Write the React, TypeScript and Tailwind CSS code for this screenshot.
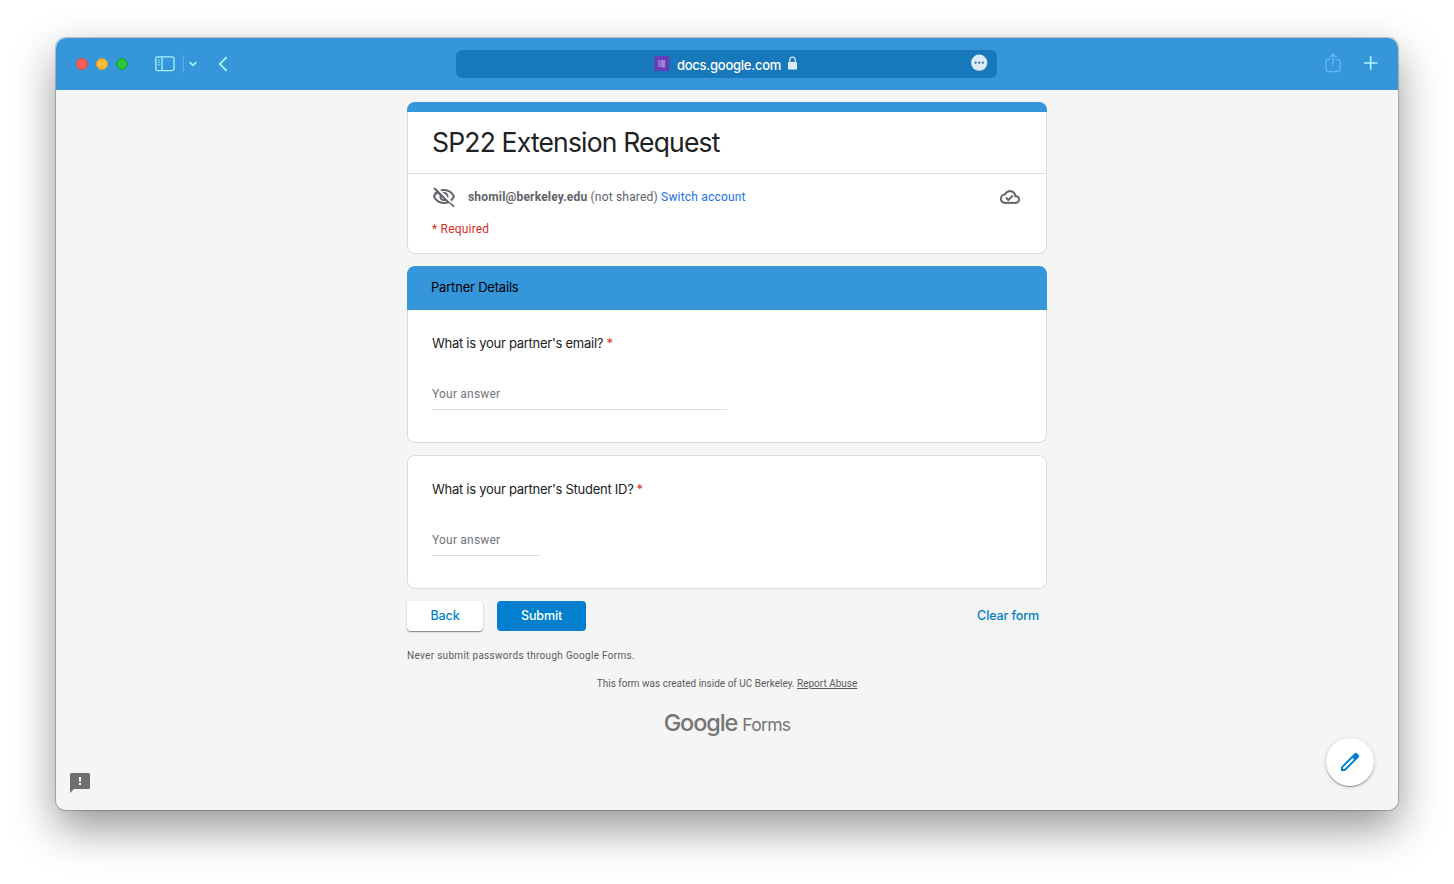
import type { ReactNode } from 'react';

const body = "font-['Roboto',sans-serif]";
const display = "font-['Inter',sans-serif]";

function SidebarIcon() {
  return (
    <svg width="20" height="16" viewBox="0 0 20 16" fill="none" stroke="#a5f5ff" strokeWidth="1.3">
      <rect x="0.8" y="0.8" width="18.2" height="13.8" rx="1.8" />
      <path d="M7 1v13.5" />
      <path d="M2.6 4.1h2.4M2.6 6.4h2.4M2.6 8.7h2.4" strokeWidth="1" opacity="0.8" />
    </svg>
  );
}

function BrowserBar() {
  return (
    <header className="grid h-[52px] shrink-0 grid-cols-[400px_541px_401px] items-center bg-[#3596da]">
      <div className="flex h-full items-center pl-5">
        <div className="flex gap-2">
          <span className="size-3 rounded-full border border-[#d8463f] bg-[#ff5f57]" />
          <span className="size-3 rounded-full border border-[#d99a2c] bg-[#febc3e]" />
          <span className="size-3 rounded-full border border-[#16992a] bg-[#28c440]" />
        </div>
        <div className="ml-[27px] flex items-center">
          <SidebarIcon />
          <span className="ml-2 h-[18px] w-px bg-[#57abec]" />
          <svg className="ml-[5px]" width="8" height="6" viewBox="0 0 8 6" fill="none" stroke="#a5f5ff" strokeWidth="1.7" strokeLinecap="round" strokeLinejoin="round">
            <path d="M1.2 1.6 4 4.4l2.8-2.8" />
          </svg>
        </div>
        <svg className="ml-[21px]" width="10" height="16" viewBox="0 0 10 16" fill="none" stroke="#a5f5ff" strokeWidth="1.8" strokeLinecap="round" strokeLinejoin="round">
          <path d="M8.2 1.6 1.8 8l6.4 6.4" />
        </svg>
      </div>

      <div className="flex h-7 items-center rounded-md bg-[#1778bb] pr-[9px] pl-[198px]">
        <svg className="mb-px" width="16" height="15" viewBox="0 0 16 15">
          <rect x="0.3" width="15" height="15" rx="1" fill="#673ab7" />
          <path d="M5 4v7" stroke="#c3abe6" strokeWidth="1" />
          <path d="M6.500 4.700h4.700M6.500 6.600h4.700M6.500 8.500h4.700M6.500 10.400h4.700" stroke="#a98ad8" strokeWidth="1.600" />
        </svg>
        <span className="ml-[7px] w-[104px] pt-px font-['Inter',sans-serif] text-[13px] leading-4 font-medium tracking-[-0.26px] whitespace-nowrap text-white">
          docs.google.com
        </span>
        <svg className="mb-[2px] ml-[6px]" width="11" height="14" viewBox="0 0 11 14">
          <rect x="1" y="6" width="9" height="7.6" rx="1.2" fill="#dcebf5" />
          <path d="M2.700 6.500V4a2.800 2.800 0 0 1 5.600 0v2.500" fill="none" stroke="#dcebf5" strokeWidth="1.2" />
        </svg>
        <svg className="mb-[3px] ml-auto" width="17" height="17" viewBox="0 0 17 17">
          <circle cx="8.2" cy="8.7" r="8.1" fill="#dcebf5" />
          <circle cx="4.6" cy="8.7" r="1.1" fill="#1778bb" />
          <circle cx="8.2" cy="8.7" r="1.1" fill="#1778bb" />
          <circle cx="11.8" cy="8.7" r="1.1" fill="#1778bb" />
        </svg>
      </div>

      <div className="flex items-center justify-end pr-5 pb-[2px]">
        <svg width="16" height="20" viewBox="0 0 16 20" fill="none" stroke="#5db8fb" strokeWidth="1.3" strokeLinecap="round" strokeLinejoin="round">
          <path d="M5 6.500H3a2 2 0 0 0-2 2V16.500a2 2 0 0 0 2 2h10a2 2 0 0 0 2-2V8.500a2 2 0 0 0-2-2h-2" />
          <path d="M8 12V1M4.900 4 8 0.900l3.100 3.100" />
        </svg>
        <svg className="ml-[23.500px]" width="14" height="14" viewBox="0 0 14 14" fill="none" stroke="#b0f7ff" strokeWidth="1.6" strokeLinecap="round">
          <path d="M6.700 0.800v12.400M0.500 7h12.400" />
        </svg>
      </div>
    </header>
  );
}

function Question({ title, titleWidth, lineWidth }: { title: string; titleWidth: string; lineWidth: string }) {
  return (
    <div className="px-6">
      <p className={`${display} flex h-5 items-center text-[13px] leading-5 tracking-[-0.27px] whitespace-nowrap text-[#202124]`}>
        <span className={titleWidth}>{title}</span>
        <span className="ml-[3.5px] text-[#d93025]">*</span>
      </p>
      <div className={`mt-[26px] flex h-[31px] border-b border-[#dadce0] ${lineWidth}`}>
        <span className={`${body} pt-[5px] text-[12px] leading-5 tracking-[0.2px] text-[#70757a]`}>Your answer</span>
      </div>
    </div>
  );
}

function Card({ className, children }: { className: string; children: ReactNode }) {
  return <section className={`rounded-lg border border-[#dadce0] bg-white ${className}`}>{children}</section>;
}

export default function App() {
  return (
    <div className={`${body} flex h-[884px] w-[1454px] overflow-hidden bg-white px-[56px] pt-[38px] pb-[74px]`}>
      <div className="relative flex w-[1342px] flex-col rounded-[10px] shadow-[0_0_1px_1px_rgba(0,0,0,0.22),0_18px_44px_rgba(0,0,0,0.42)]">
        <div className="flex flex-1 flex-col overflow-hidden rounded-[10px] bg-[#f5f5f5]">
          <BrowserBar />

          <main className="mx-auto flex w-[640px] flex-col pt-3">
            <section className="h-[152px]">
              <div className="h-[10px] rounded-t-lg bg-[#3596da]" />
              <div className="h-[142px] rounded-b-lg border border-t-0 border-[#dadce0] bg-white">
                <div className="flex h-[62px] items-center border-b border-[#dadce0] px-6 pb-px">
                  <h1 className={`${display} text-[26.5px] leading-9 tracking-[-0.82px] whitespace-nowrap text-[#202124]`}>
                    SP22 Extension Request
                  </h1>
                </div>
                <div className="flex h-[46px] items-center px-6 text-[12px] tracking-[0.19px] text-[#5f6368]">
                  <svg width="24" height="24" viewBox="0 0 24 24" fill="#5f6368">
                    <path d="M10.580 7.250l1.560 1.560c1.380.070 2.470 1.170 2.540 2.540l1.560 1.560c.170-.440.260-.920.260-1.410C16.500 9.020 14.480 7 12 7c-.500 0-.970.090-1.420.250z" />
                    <path d="M12 6c3.790 0 7.170 2.130 8.820 5.500-.640 1.320-1.560 2.440-2.660 3.330l1.420 1.420c1.510-1.260 2.700-2.890 3.420-4.750C21.270 7.110 17 4 12 4c-1.400 0-2.730.250-3.980.700L9.630 6.300C10.400 6.120 11.190 6 12 6z" />
                    <path d="M16.430 15.930l-1.250-1.250-1.270-1.270-3.820-3.820-1.270-1.270-1.250-1.250-1.480-1.480L2.810 2.310 1.390 3.730l2.640 2.640C2.730 7.600 1.660 9.420 1 11.500 2.730 15.890 7 19 12 19c1.770 0 3.450-.400 4.960-1.100l4.430 4.430 1.410-1.410-6.370-4.990zM11.860 14.190c-1.380-.070-2.470-1.170-2.540-2.540l2.540 2.540zM12 17c-3.790 0-7.170-2.130-8.820-5.500.560-1.150 1.340-2.150 2.270-2.980l2.310 2.310c-.170.430-.260.910-.260 1.400C7.500 14.220 9.520 16 12 16c.490 0 .960-.090 1.400-.260l.980.980C13.620 16.890 12.820 17 12 17z" />
                  </svg>
                  <span className="ml-3 whitespace-nowrap">
                    <b className="font-bold">shomil@berkeley.edu</b> (not shared) <a className="text-[#1a73e8]">Switch account</a>
                  </span>
                  <svg className="mr-[2px] ml-auto" width="20" height="20" viewBox="0 0 24 24" fill="#5f6368" stroke="#5f6368" strokeWidth="0.4">
                    <path d="M19.350 10.040C18.670 6.590 15.640 4 12 4 9.110 4 6.610 5.640 5.360 8.040 2.350 8.360 0 10.900 0 14c0 3.310 2.690 6 6 6h13c2.760 0 5-2.240 5-5 0-2.640-2.050-4.780-4.650-4.960zM19 18H6c-2.210 0-4-1.790-4-4 0-2.050 1.530-3.760 3.560-3.970l1.070-.110.500-.950C8.080 7.140 9.940 6 12 6c2.620 0 4.880 1.860 5.390 4.430l.300 1.500 1.530.110c1.560.100 2.780 1.410 2.780 2.960 0 1.650-1.350 3-3 3zm-9-3.820l-2.090-2.090L6.500 13.500 10 17l6.010-6.010-1.410-1.410z" />
                  </svg>
                </div>
                <p className="px-6 text-[12px] leading-[18px] tracking-[0.2px] text-[#d93025]">* Required</p>
              </div>
            </section>

            <section className="mt-3 flex h-[177px] flex-col">
              <h2 className={`${display} flex h-11 items-center rounded-t-lg bg-[#3596da] px-6 pb-px text-[13px] font-normal tracking-[-0.2px] text-black`}>Partner Details</h2>
              <div className="flex-1 rounded-b-lg border border-t-0 border-[#dadce0] bg-white pt-[23px]">
                <Question title="What is your partner's email?" titleWidth="w-[171px]" lineWidth="w-[295px]" />
              </div>
            </section>

            <Card className="mt-3 h-[134px] pt-[23px]">
              <Question title="What is your partner's Student ID?" titleWidth="w-[201px]" lineWidth="w-[107px]" />
            </Card>

            <div className={`${display} mt-3 flex h-[30px] items-center text-[12.5px] font-medium tracking-[-0.12px]`}>
              <button className="h-[30px] w-[76px] rounded bg-white text-[#007fcb] shadow-[0_1px_1px_rgba(0,0,0,0.4),0_1px_3px_rgba(0,0,0,0.12)]">Back</button>
              <button className="ml-[14px] h-[30px] w-[89px] rounded bg-[#0080ce] text-white">Submit</button>
              <button className="mr-2 ml-auto text-[#007fcb]">Clear form</button>
            </div>

            <p className="mt-[17px] text-[10px] leading-4 tracking-[0.3px] text-[#5c5c5c]">Never submit passwords through Google Forms.</p>
            <p className="mt-3 text-center text-[10px] leading-4 text-[#5c5c5c]">
              This form was created inside of UC Berkeley. <a className="underline">Report Abuse</a>
            </p>
            <div className={`${display} mt-[15px] flex h-8 items-baseline justify-center text-[#757575]`}>
              <span className="text-[23.5px] leading-8 font-medium tracking-[-1.1px]">Google</span>
              <span className="ml-[5px] text-[17.5px] leading-8 tracking-[-0.7px]">Forms</span>
            </div>
          </main>
        </div>

        <svg className="absolute bottom-[17px] left-[14px]" width="20" height="20" viewBox="0 0 20 20">
          <path d="M1.500 0H18.500A1.500 1.500 0 0 1 20 1.500V14.500A1.500 1.500 0 0 1 18.500 16H4L0 20V1.500A1.500 1.500 0 0 1 1.500 0Z" fill="#6f6f6f" />
          <path d="M9 4h2v4.500H9zM9 10h2v2H9z" fill="#fff" />
        </svg>
        <button className="absolute right-6 bottom-6 flex size-12 items-center justify-center rounded-full bg-white shadow-[0_1px_1px_rgba(0,0,0,0.35),0_1px_5px_rgba(0,0,0,0.15)]">
          <svg width="24" height="24" viewBox="0 0 24 24" fill="#0080ce">
            <path fillRule="evenodd" d="M20.400 4.800 19.200 3.600a2 2 0 0 0-2.900 0L3 16.900V21h4.100L20.400 7.700a2 2 0 0 0 0-2.900ZM6.300 19.100H4.900v-1.400l9.700-9.700 1.400 1.400Z" />
          </svg>
        </button>
      </div>
    </div>
  );
}
